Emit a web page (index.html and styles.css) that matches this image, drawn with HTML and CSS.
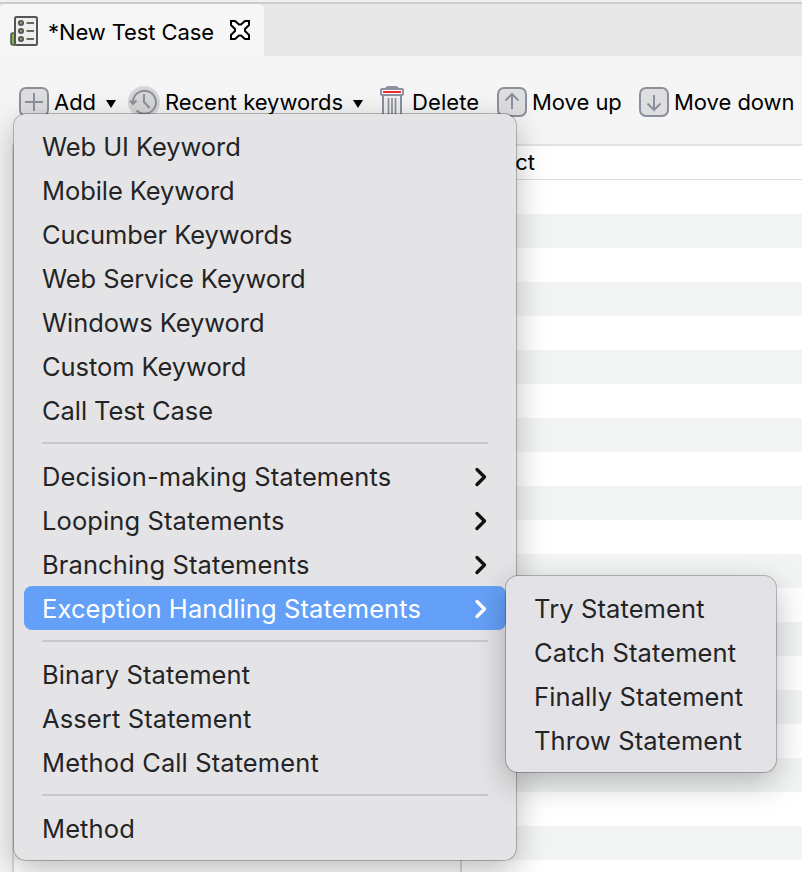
FILE: index.html
```html
<!DOCTYPE html>
<html lang="en">
<head>
<meta charset="utf-8">
<title>New Test Case</title>
<link rel="stylesheet" href="styles.css">
</head>
<body>
<div class="window">
  <header class="tabs">
    <div class="tab">
      <svg class="tab-icon" width="30" height="32" viewBox="0 0 30 32"><path d="M5 17H2.500q-1.500 0-1.500 2v8q0 2 2 2h2" fill="#75b843" stroke="#555" stroke-width="1.600"/><rect x="5" y="1" width="22" height="28" rx="1.500" fill="#eee" stroke="#555" stroke-width="2"/><g fill="#75a654" stroke="#555" stroke-width="1.700"><circle cx="11" cy="7" r="2.200"/><circle cx="11" cy="15" r="2.200"/><circle cx="11" cy="23" r="2.200"/></g><path d="M16.500 7H24M16.500 15H24M16.500 23H24" stroke="#666" stroke-width="2"/></svg>
      <span class="tab-title">*New Test Case</span>
      <svg class="close" width="22" height="22" viewBox="0 0 22 22"><path d="M2 2H6L10 5.500H12L16 2H20V6L16 10V12L20 16V20H16L12 16.500H10L6 20H2V16L6 12V10L2 6Z" fill="#fff" stroke="#000" stroke-width="2"/></svg>
    </div>
  </header>
  <div class="toolbar">
    <div class="tool add">
      <svg width="30" height="30" viewBox="0 0 30 30"><rect x="1" y="1" width="28" height="28" rx="6" fill="#dedee1" stroke="#8b919c" stroke-width="2"/><path d="M15 6V24M6 15H24" stroke="#8b919c" stroke-width="2"/></svg>
      <span>Add</span><i class="caret"></i>
    </div>
    <div class="tool recent">
      <svg width="32" height="32" viewBox="0 0 32 32"><circle cx="16" cy="16" r="16" fill="#d6d6d7"/><path d="M5 17A11.500 11.500 0 1 1 8.500 24.500M16 8V16L21.500 22M2 14.500 5 18 8.500 14.500" fill="none" stroke="#8b919c" stroke-width="2"/></svg>
      <span>Recent keywords</span><i class="caret"></i>
    </div>
    <div class="tool delete">
      <svg width="24" height="32" viewBox="0 0 24 32"><path d="M6 2Q7 1 9 1H15Q17 1 18 2" fill="none" stroke="#8b919c" stroke-width="2"/><path d="M3 9H21V31H3Z" fill="#eee" stroke="#8b919c" stroke-width="2"/><rect x="1" y="3" width="22" height="6" rx="1" fill="#fff" stroke="#8b919c" stroke-width="2"/><path d="M3 6H21" stroke="#ee292b" stroke-width="2"/><path d="M8.500 12V31M12 12V31M15.500 12V31" stroke="#8b919c" stroke-width="1.700"/></svg>
      <span>Delete</span>
    </div>
    <div class="tool up">
      <svg width="30" height="30" viewBox="0 0 30 30"><rect x="1" y="1" width="28" height="28" rx="6" fill="#dedee1" stroke="#8b919c" stroke-width="2"/><path d="M15 22V7.500M8.500 13.500 15 7 21.500 13.500" fill="none" stroke="#8b919c" stroke-width="2"/></svg>
      <span>Move up</span>
    </div>
    <div class="tool down">
      <svg width="30" height="30" viewBox="0 0 30 30"><rect x="1" y="1" width="28" height="28" rx="6" fill="#dedee1" stroke="#8b919c" stroke-width="2"/><path d="M15 8V22.500M8.500 16.500 15 23 21.500 16.500" fill="none" stroke="#8b919c" stroke-width="2"/></svg>
      <span>Move down</span>
    </div>
  </div>
  <main class="table">
    <div class="table-head"><div class="col-item"></div><div class="col-object">Object</div></div>
    <div class="table-body"><div class="col-item"></div></div>
  </main>
</div>

<nav class="menu main-menu">
  <div class="item keyword"><span>Web UI Keyword</span></div>
  <div class="item keyword"><span>Mobile Keyword</span></div>
  <div class="item keyword"><span>Cucumber Keywords</span></div>
  <div class="item keyword"><span>Web Service Keyword</span></div>
  <div class="item keyword"><span>Windows Keyword</span></div>
  <div class="item keyword"><span>Custom Keyword</span></div>
  <div class="item keyword"><span>Call Test Case</span></div>
  <hr>
  <div class="item"><span>Decision-making Statements</span><svg class="chevron" width="14" height="20" viewBox="0 0 14 20"><path d="M3 2.500 10.500 10 3 17.500"/></svg></div>
  <div class="item"><span>Looping Statements</span><svg class="chevron" width="14" height="20" viewBox="0 0 14 20"><path d="M3 2.500 10.500 10 3 17.500"/></svg></div>
  <div class="item"><span>Branching Statements</span><svg class="chevron" width="14" height="20" viewBox="0 0 14 20"><path d="M3 2.500 10.500 10 3 17.500"/></svg></div>
  <div class="item selected"><span>Exception Handling Statements</span><svg class="chevron" width="14" height="20" viewBox="0 0 14 20"><path d="M3 2.500 10.500 10 3 17.500"/></svg></div>
  <hr>
  <div class="item"><span>Binary Statement</span></div>
  <div class="item"><span>Assert Statement</span></div>
  <div class="item"><span>Method Call Statement</span></div>
  <hr>
  <div class="item"><span>Method</span></div>
</nav>
<nav class="menu submenu">
  <div class="item"><span>Try Statement</span></div>
  <div class="item"><span>Catch Statement</span></div>
  <div class="item"><span>Finally Statement</span></div>
  <div class="item"><span>Throw Statement</span></div>
</nav>
</body>
</html>
```
FILE: styles.css
```css
* { box-sizing: border-box; }
body { margin: 0; font-family: Inter, "Liberation Sans", sans-serif; color: #000; }
svg { display: block; flex: none; }
.window { width: 802px; height: 872px; overflow: hidden; background: #f5f5f5; display: flex; flex-direction: column; }
.tabs { height: 56px; flex: none; background: #e8e8e8; border-top: 2px solid #f0f0f0; }
.tabs::before { content: ""; display: block; height: 2px; background: #cbcbcb; }
.tab { width: 264px; height: 52px; background: #f6f6f6; border-radius: 5px 5px 0 0; display: flex; align-items: center; padding: 3px 0 0 10px; }
.tab-title { font-size: 22px; letter-spacing: -0.1px; margin-left: 8px; width: 181px; white-space: nowrap; }
.close { margin-top: -3px; }
.toolbar { height: 88px; flex: none; display: flex; padding: 30px 0 0 19px; }
.tool { display: flex; align-items: center; height: 32px; font-size: 22px; letter-spacing: -0.04px; white-space: nowrap; }
.tool span { margin-left: 5px; }
.add { width: 109px; }
.recent { width: 252px; }
.delete { width: 117px; letter-spacing: 0.1px; }
.delete span { margin-left: 8px; }
.up { width: 142px; }
.caret { border: 5.5px solid transparent; border-top: 8px solid #000; border-bottom: 0; margin: 3px 0 0 10px; }
.table { flex: 1; display: flex; flex-direction: column; margin-left: 12px; border-left: 2px solid #dadada; border-top: 2px solid #e2e2e2; background: #fff; }
.table-head { height: 34px; flex: none; border-bottom: 1px solid #ddd; display: flex; align-items: center; }
.table-body { flex: 1; display: flex; background: repeating-linear-gradient(#fff 0 34px, #f3f5f5 34px 68px); }
.col-item { width: 448px; height: 100%; border-right: 2px solid #dadada; }
.col-object { font-size: 22px; width: 73px; padding-bottom: 2px; text-align: right; }
.menu { position: absolute; padding: 10px; border-radius: 12px; background: #e4e4e6; box-shadow: 0 0 0 1px rgba(0,0,0,.24), 0 10px 32px rgba(0,0,0,.27); }
.main-menu { left: 14px; top: 114px; width: 502px; height: 746px; }
.submenu { left: 506px; top: 576px; width: 270px; height: 196px; background: #e3e2e7; }
.item { display: flex; align-items: center; justify-content: space-between; height: 44px; padding: 0 18px; font-size: 25.5px; letter-spacing: 0.11px; color: #242426; white-space: nowrap; border-radius: 8px; }
.keyword { letter-spacing: -0.08px; }
.main-menu .item { width: 482px; }
.selected { background: #65a0f8; color: #fff; }
.menu hr { border: 0; height: 2px; margin: 10px 18px; background: #c8c8ca; }
.chevron { margin-top: 2px; fill: none; stroke: #111; stroke-width: 3.4; stroke-linecap: round; stroke-linejoin: round; }
.selected .chevron { stroke: #fff; }
```
